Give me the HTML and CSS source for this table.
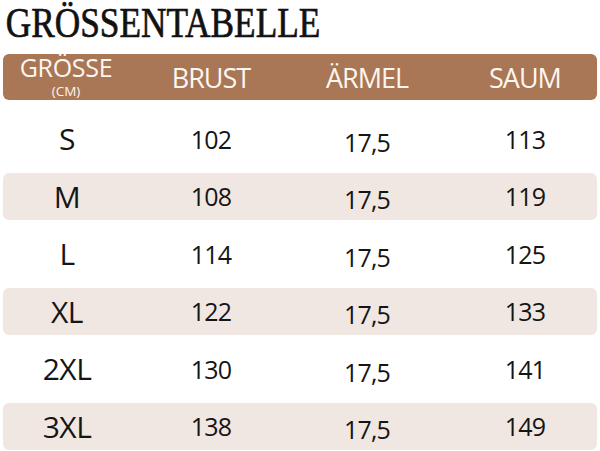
FILE: index.html
```html
<!DOCTYPE html>
<html lang="de">
<head>
<meta charset="utf-8">
<link rel="stylesheet" href="styles.css">
</head>
<body>
<div class="page">
  <h1 class="title">GRÖSSENTABELLE</h1>
  <div class="table">
    <div class="row head">
      <div class="cell size-h"><span class="h-main">GRÖSSE</span><span class="h-sub">(CM)</span></div>
      <div class="cell">BRUST</div>
      <div class="cell">ÄRMEL</div>
      <div class="cell last">SAUM</div>
    </div>
    <div class="body">
      <div class="row"><div class="cell size">S</div><div class="cell num">102</div><div class="cell num low">17,5</div><div class="cell num last">113</div></div>
      <div class="row band"><div class="cell size">M</div><div class="cell num">108</div><div class="cell num low">17,5</div><div class="cell num last">119</div></div>
      <div class="row"><div class="cell size">L</div><div class="cell num">114</div><div class="cell num low">17,5</div><div class="cell num last">125</div></div>
      <div class="row band"><div class="cell size">XL</div><div class="cell num">122</div><div class="cell num low">17,5</div><div class="cell num last">133</div></div>
      <div class="row"><div class="cell size">2XL</div><div class="cell num">130</div><div class="cell num low">17,5</div><div class="cell num last">141</div></div>
      <div class="row band"><div class="cell size">3XL</div><div class="cell num">138</div><div class="cell num low">17,5</div><div class="cell num last">149</div></div>
    </div>
  </div>
</div>
</body>
</html>
```
FILE: styles.css
```css
html, body {
  margin: 0;
  padding: 0;
  background: #ffffff;
}
.page {
  width: 600px;
  height: 451px;
  overflow: hidden;
}
.title {
  margin: 0;
  padding: 0 0 0 7px;
  height: 54px;
  font-family: "Liberation Serif", serif;
  font-weight: 400;
  font-size: 43px;
  line-height: 46px;
  color: #111111;
  -webkit-text-stroke: 0.7px #111111;
  transform: scaleX(0.82);
  transform-origin: left center;
  white-space: nowrap;
}
.table {
  margin: 0 3px;
  display: flex;
  flex-direction: column;
}
.row {
  display: grid;
  grid-template-columns: 126px 164px 148px 1fr;
  height: 47px;
  align-items: center;
  border-radius: 6px;
}
.head {
  height: 46px;
  background: #a97656;
  color: #fdf7ef;
  font-family: "Open Sans", sans-serif;
  font-size: 27px;
  letter-spacing: -1px;
}
.cell {
  text-align: center;
}
.last {
  padding-left: 12px;
}
.size-h {
  display: flex;
  flex-direction: column;
  align-items: center;
}
.h-main {
  font-size: 25px;
  line-height: 20px;
  letter-spacing: -0.3px;
  margin-top: -1px;
}
.h-sub {
  font-size: 13.5px;
  line-height: 12px;
  letter-spacing: 0;
  margin-top: 8px;
}
.body {
  display: flex;
  flex-direction: column;
  gap: 10.6px;
  padding-top: 15px;
}
.band {
  background: #f0e7e2;
}
.size {
  font-family: "Open Sans", sans-serif;
  font-size: 30px;
  color: #151515;
  letter-spacing: -0.5px;
  padding-left: 2px;
}
.num {
  font-family: "Open Sans", sans-serif;
  font-size: 25px;
  color: #151515;
  letter-spacing: -0.8px;
}
.low {
  padding-top: 6px;
}
```
